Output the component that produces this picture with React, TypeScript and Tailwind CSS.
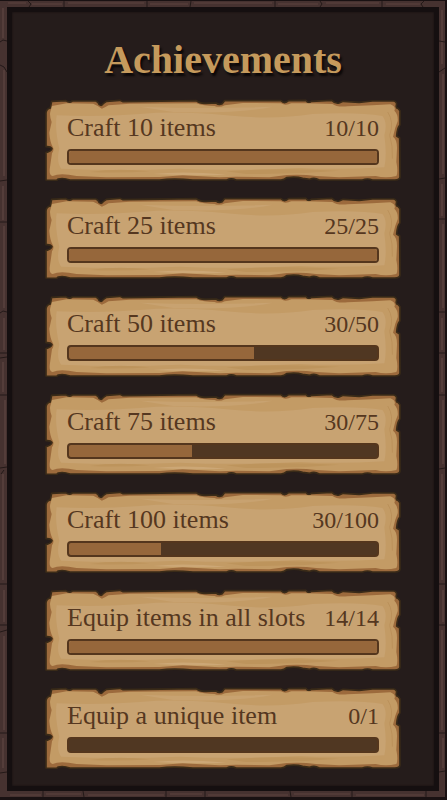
import React from "react";

interface Achievement {
  title: string;
  current: number;
  total: number;
}

const achievements: Achievement[] = [
  { title: "Craft 10 items", current: 10, total: 10 },
  { title: "Craft 25 items", current: 25, total: 25 },
  { title: "Craft 50 items", current: 30, total: 50 },
  { title: "Craft 75 items", current: 30, total: 75 },
  { title: "Craft 100 items", current: 30, total: 100 },
  { title: "Equip items in all slots", current: 14, total: 14 },
  { title: "Equip a unique item", current: 0, total: 1 },
];

// Torn edge of the parchment
const outerEdge =
  "M35 28 L78 26 Q88 34 97 27 L168 27 Q176 30 178 38 Q186 43 190 35 L200 28 L240 25 L250 29 L310 28 L470 26 Q480 35 500 34 L530 33 Q538 40 548 35 L555 26 L725 26 Q735 37 748 26 L800 25 Q807 36 816 28 L878 25 Q888 36 900 33 L912 28 L960 31 L1000 27 L1064 27 Q1075 30 1072 40 Q1070 48 1078 50 L1083 56 L1083 98 Q1074 110 1073 132 L1082 138 L1083 254 Q1083 263 1068 264 L1000 264 Q985 258 970 264 L840 264 Q825 255 812 262 L790 259 Q770 253 742 257 Q735 264 725 264 L590 264 Q575 257 562 264 L460 264 Q400 259 360 264 L90 264 Q70 257 55 261 L50 265 L18 264 L18 182 Q34 178 36 170 Q32 163 18 164 L18 62 Q20 50 31 48 Z";

const innerFace =
  "M36 42 L80 34 L160 35 Q176 42 186 50 Q198 46 206 40 L270 35 L470 34 Q492 42 525 42 Q540 48 556 40 L610 33 L725 34 Q738 42 756 34 L800 34 L880 36 Q892 46 925 43 L1000 40 L1054 37 Q1072 44 1066 56 Q1078 68 1076 88 Q1068 106 1062 134 Q1074 142 1074 168 L1072 210 Q1078 240 1072 252 Q1040 260 1010 252 L900 256 L830 252 Q790 246 742 249 L690 256 L590 254 L540 256 L430 250 L360 255 L200 256 L110 252 Q60 242 38 252 Q26 250 30 226 L36 184 Q44 172 38 164 Q30 150 28 122 L35 90 Q28 70 31 60 Z";

const Parchment: React.FC = () => (
  <svg
    className="absolute inset-0 h-full w-full"
    viewBox="12 18 1077 249"
    preserveAspectRatio="none"
    aria-hidden="true"
  >
    <path d={outerEdge} fill="#9c6a3c" stroke="#3a2b18" strokeWidth="5" strokeLinejoin="round" />
    <path d={innerFace} fill="#c39b65" />
    <path
      d="M50 70 Q180 76 300 66 T560 70 T820 66 Q960 60 1030 72 Q1046 90 1036 130 Q1044 190 1036 226 Q900 234 780 228 Q600 238 420 230 Q240 238 64 230 Q48 210 58 170 Q44 110 50 70 Z"
      fill="#c8a372"
    />
    <path d="M300 44 Q500 52 700 44 Q600 66 400 60 Z" fill="#c8a270" />
    <path d="M560 238 Q720 226 900 236 Q760 248 620 246 Z" fill="#bd945c" />
    <path d="M340 246 Q430 236 560 248 Q460 252 340 246 Z" fill="#cca776" />
    <path d="M150 240 Q230 228 330 238 Q240 244 150 240 Z" fill="#bd945c" />
    <path d="M1046 60 Q1066 90 1052 130 Q1062 160 1060 200" fill="none" stroke="#bb915a" strokeWidth="3" />
  </svg>
);

const AchievementCard: React.FC<{ achievement: Achievement }> = ({ achievement }) => {
  const { title, current, total } = achievement;
  const percent = (current / total) * 100;

  return (
    <li className="relative pt-4 pr-[23px] pb-4 pl-[23px]">
      <Parchment />
      <div className="relative">
        <div className="flex h-7 items-center justify-between text-2xl text-[#553720]">
          <h2 className="text-[26px]">{title}</h2>
          <span>
            {current}/{total}
          </span>
        </div>
        <div
          className="mt-[7px] h-4 overflow-hidden rounded-sm border-2 border-[#54361d] bg-[#503722]"
          role="progressbar"
          aria-label={title}
          aria-valuenow={current}
          aria-valuemax={total}
        >
          <div className="h-full bg-[#96673b]" style={{ width: `${percent}%` }} />
        </div>
      </div>
    </li>
  );
};

// Joints and grain of the stone border
const StoneJoints: React.FC = () => (
  <svg
    className="pointer-events-none absolute inset-0 h-full w-full"
    viewBox="0 0 447 800"
    preserveAspectRatio="none"
    fill="none"
    aria-hidden="true"
  >
    <path
      d="M3 8 V38 M4 70 V176 M3 186 V220 M4 226 V308 M4 318 V350 M3 362 V392 M5 400 V464 M3 474 V580 M4 590 V622 M4 636 V730 M3 738 V768 M442 10 V64 M443 74 V174 M442 184 V216 M443 224 V308 M442 318 V350 M442 358 V392 M443 400 V464 M442 474 V580 M443 590 V622 M442 630 V730 M443 738 V768"
      stroke="#543d3a"
      strokeWidth="2"
    />
    <path
      d="M8 3 H26 M32 4 H62 M68 3 H144 M150 4 H188 M194 3 H272 M278 4 H318 M326 3 H379 M386 4 H420 M10 795 H41 M46 794 H81 M88 795 H164 M170 794 H202 M208 795 H288 M294 794 H350 M356 795 H424"
      stroke="#513a37"
      strokeWidth="2"
    />
    <path
      d="M0 42 L3 40 L7 41 M0 65 L4 67 L7 72 M0 181 L7 180 M0 222 H7 M0 313 L3 311 L7 312 M0 353 H7 M0 358 L7 357 M0 395 H7 M0 468 L7 467 M1 474 L4 470 M0 584 H7 M0 625 H7 M0 632 L7 630 M0 733 H7 M0 773 L7 772 M439 41 L445 42 M439 72 L445 68 M439 179 L445 178 M439 219 H445 M439 312 H445 M439 353 H445 M439 395 H445 M439 469 L445 468 M439 584 H445 M439 625 H445 M439 733 H445 M439 772 L445 771"
      stroke="#231918"
    />
    <path
      d="M28 1 L31 4 L29 7 M64 1 V7 M147 1 V7 M191 1 L190 7 M275 1 V7 M320 1 L322 4 L320 7 M382 1 V7 M424 1 L421 4 L423 7 M43 791 V797 M83 791 L84 797 M166 791 V797 M205 791 V797 M290 791 L291 797 M352 791 V797 M426 791 V797"
      stroke="#231918"
    />
  </svg>
);

export default function App() {
  return (
    <div className="relative flex min-h-screen flex-col bg-[#191112] pt-px pr-0.5 pb-[3px] font-['Liberation_Serif',serif]">
      <div className="flex grow flex-col bg-[#463230] p-1.5 pl-[7px]">
        <main className="grow border-[5px] border-[#150f10] bg-[#251c1b] px-8 pt-6 pb-4 shadow-[inset_0_0_2px_#130d0e]">
          <h1 className="mb-3.5 text-center text-[40px] leading-12 font-bold text-[#c59a5c] [text-shadow:2px_3px_2px_#0c0808]">
            Achievements
          </h1>
          <ul className="flex flex-col gap-[15px]">
            {achievements.map((achievement) => (
              <AchievementCard key={achievement.title} achievement={achievement} />
            ))}
          </ul>
        </main>
      </div>
      <StoneJoints />
    </div>
  );
}
